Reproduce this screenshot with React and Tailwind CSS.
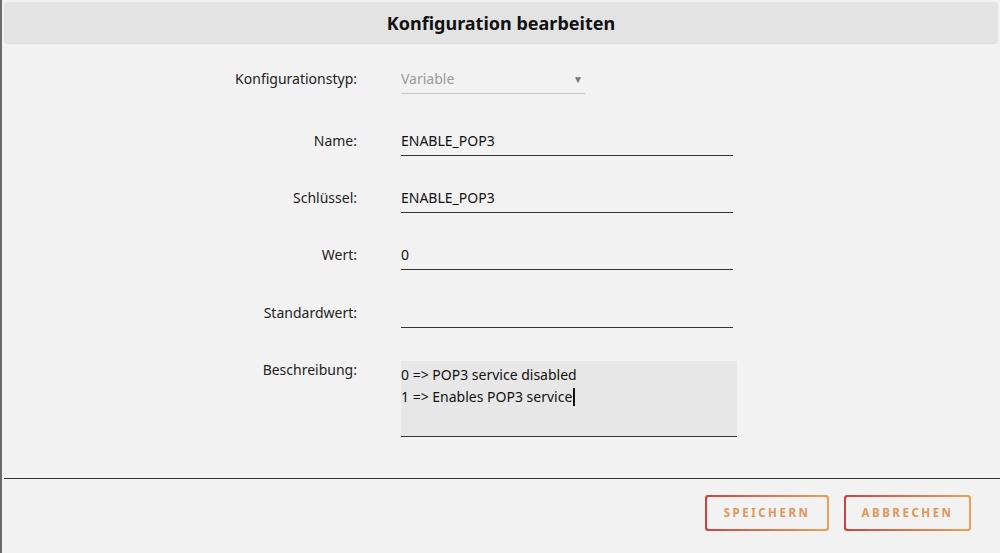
import React from 'react';

const fields = [
  { label: 'Name:', value: 'ENABLE_POP3', gap: 'mt-[35px]' },
  { label: 'Schlüssel:', value: 'ENABLE_POP3', gap: 'mt-[30px]' },
  { label: 'Wert:', value: '0', gap: 'mt-[30px]' },
  { label: 'Standardwert:', value: '', gap: 'mt-[31px]' },
];

function Row({ label, children, className = '', labelClass = 'pt-[2px]' }) {
  return (
    <div className={`flex items-start ${className}`}>
      <div className={`w-[355px] shrink-0 text-right text-[14px] leading-[20px] text-[#222] ${labelClass}`}>{label}</div>
      <div className="ml-[44px]">{children}</div>
    </div>
  );
}

function OutlineButton({ children, width }) {
  return (
    <div className={`rounded-[3px] bg-gradient-to-r from-[#c8443e] to-[#e9a159] p-[2px] ${width}`}>
      <button className="flex h-[32px] w-full items-center justify-center rounded-[2px] bg-[#f3f2f2] text-[11.5px] font-bold tracking-[0.22em] text-[#e0955a]">
        {children}
      </button>
    </div>
  );
}

export default function App() {
  return (
    <div
      className="h-[553px] w-[1000px] overflow-hidden border-l-2 border-[#6b6b6b] bg-[#f2f2f2]"
      style={{ fontFamily: '"Noto Sans", "Open Sans", sans-serif' }}
    >
      <div className="mx-[2px] mt-[2px] flex h-[41px] items-center justify-center rounded-[4px] bg-[#e3e3e3] shadow-[0_1px_1px_rgba(0,0,0,0.08)]">
        <h1 className="pt-[1px] text-[18px] font-bold text-[#111]">Konfiguration bearbeiten</h1>
      </div>

      <div className="pt-[24px]">
        <Row label="Konfigurationstyp:">
          <div className="flex h-[27px] w-[184px] items-start justify-between border-b border-[#c8c8c8] pt-[2px] text-[14px] leading-[20px] text-[#9a9a9a]">
            <span>Variable</span>
            <span className="mr-[2px] text-[10px] leading-[20px] text-[#777]">▼</span>
          </div>
        </Row>

        {fields.map((f) => (
          <Row key={f.label} label={f.label} className={f.gap}>
            <div className="h-[27px] w-[332px] border-b-[1.5px] border-[#333] pt-[2px] text-[14px] leading-[20px] text-[#111]">
              {f.value}
            </div>
          </Row>
        ))}

        <Row label="Beschreibung:" className="mt-[33px]" labelClass="-mt-[1px]">
          <div className="h-[76px] w-[336px] border-b-[1.5px] border-[#333] bg-[#e7e7e7] pt-[3px] text-[14px] leading-[22px] text-[#111]">
            <div>0 =&gt; POP3 service disabled</div>
            <div className="flex items-center">
              1 =&gt; Enables POP3 service
              <span className="ml-[1px] inline-block h-[18px] w-[2px] bg-[#111]" />
            </div>
          </div>
        </Row>
      </div>

      <div className="ml-[2px] mt-[41px] border-t-[1.5px] border-[#333]" />

      <div className="flex justify-end gap-[15px] pr-[29px] pt-[16px]">
        <OutlineButton width="w-[124px]">SPEICHERN</OutlineButton>
        <OutlineButton width="w-[127px]">ABBRECHEN</OutlineButton>
      </div>
    </div>
  );
}
